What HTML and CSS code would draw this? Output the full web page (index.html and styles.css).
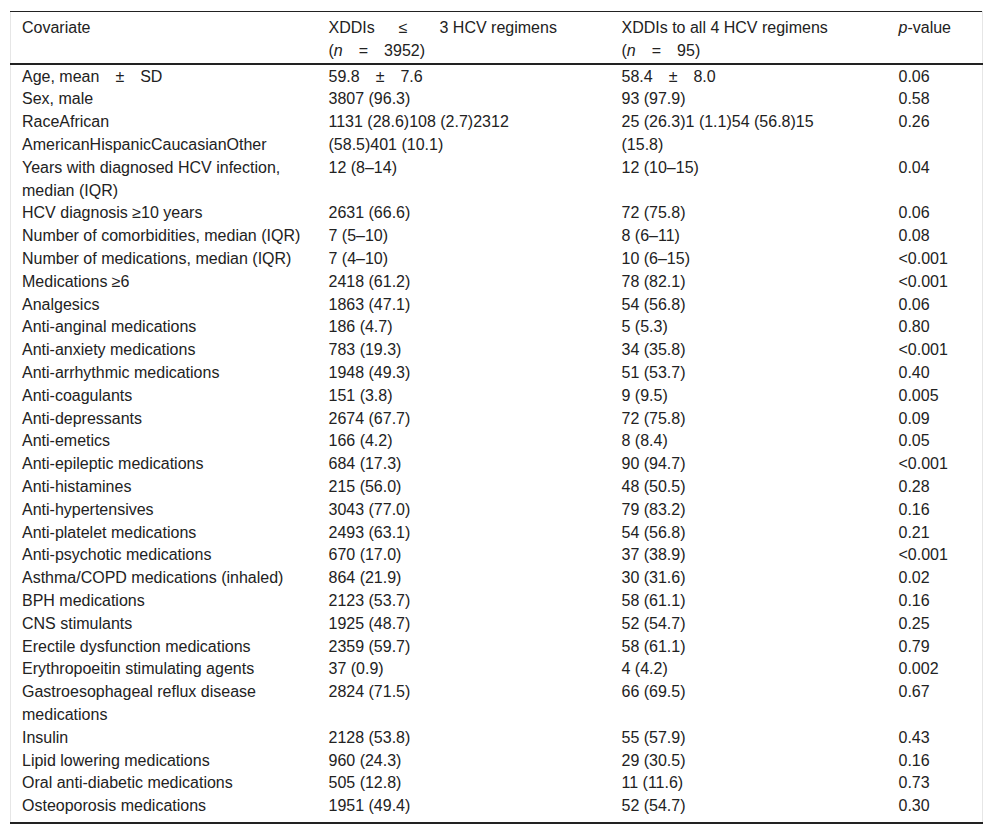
FILE: index.html
```html
<!DOCTYPE html>
<html lang="en">
<head>
<meta charset="utf-8">
<title>Covariates table</title>
<link rel="stylesheet" href="styles.css">
</head>
<body>
<table class="data">
  <colgroup>
    <col class="c1"><col class="c2"><col class="c3"><col class="c4">
  </colgroup>
  <thead>
    <tr>
      <th>Covariate</th>
      <th>XDDIs&#8195;&#8194;≤&#8195;&#8195;3 HCV regimens<br>(<i>n</i>&#8195;=&#8195;3952)</th>
      <th>XDDIs to all 4 HCV regimens<br>(<i>n</i>&#8195;=&#8195;95)</th>
      <th><i>p</i>-value</th>
    </tr>
  </thead>
  <tbody>
    <tr><td>Age, mean&#8195;±&#8195;SD</td><td>59.8&#8195;±&#8195;7.6</td><td>58.4&#8195;±&#8195;8.0</td><td>0.06</td></tr>
    <tr><td>Sex, male</td><td>3807 (96.3)</td><td>93 (97.9)</td><td>0.58</td></tr>
    <tr><td>RaceAfrican AmericanHispanicCaucasianOther</td><td>1131 (28.6)108 (2.7)2312 (58.5)401 (10.1)</td><td>25 (26.3)1 (1.1)54 (56.8)15 (15.8)</td><td>0.26</td></tr>
    <tr><td>Years with diagnosed HCV infection, median (IQR)</td><td>12 (8–14)</td><td>12 (10–15)</td><td>0.04</td></tr>
    <tr><td>HCV diagnosis ≥10 years</td><td>2631 (66.6)</td><td>72 (75.8)</td><td>0.06</td></tr>
    <tr><td>Number of comorbidities, median (IQR)</td><td>7 (5–10)</td><td>8 (6–11)</td><td>0.08</td></tr>
    <tr><td>Number of medications, median (IQR)</td><td>7 (4–10)</td><td>10 (6–15)</td><td>&lt;0.001</td></tr>
    <tr><td>Medications ≥6</td><td>2418 (61.2)</td><td>78 (82.1)</td><td>&lt;0.001</td></tr>
    <tr><td>Analgesics</td><td>1863 (47.1)</td><td>54 (56.8)</td><td>0.06</td></tr>
    <tr><td>Anti-anginal medications</td><td>186 (4.7)</td><td>5 (5.3)</td><td>0.80</td></tr>
    <tr><td>Anti-anxiety medications</td><td>783 (19.3)</td><td>34 (35.8)</td><td>&lt;0.001</td></tr>
    <tr><td>Anti-arrhythmic medications</td><td>1948 (49.3)</td><td>51 (53.7)</td><td>0.40</td></tr>
    <tr><td>Anti-coagulants</td><td>151 (3.8)</td><td>9 (9.5)</td><td>0.005</td></tr>
    <tr><td>Anti-depressants</td><td>2674 (67.7)</td><td>72 (75.8)</td><td>0.09</td></tr>
    <tr><td>Anti-emetics</td><td>166 (4.2)</td><td>8 (8.4)</td><td>0.05</td></tr>
    <tr><td>Anti-epileptic medications</td><td>684 (17.3)</td><td>90 (94.7)</td><td>&lt;0.001</td></tr>
    <tr><td>Anti-histamines</td><td>215 (56.0)</td><td>48 (50.5)</td><td>0.28</td></tr>
    <tr><td>Anti-hypertensives</td><td>3043 (77.0)</td><td>79 (83.2)</td><td>0.16</td></tr>
    <tr><td>Anti-platelet medications</td><td>2493 (63.1)</td><td>54 (56.8)</td><td>0.21</td></tr>
    <tr><td>Anti-psychotic medications</td><td>670 (17.0)</td><td>37 (38.9)</td><td>&lt;0.001</td></tr>
    <tr><td>Asthma/COPD medications (inhaled)</td><td>864 (21.9)</td><td>30 (31.6)</td><td>0.02</td></tr>
    <tr><td>BPH medications</td><td>2123 (53.7)</td><td>58 (61.1)</td><td>0.16</td></tr>
    <tr><td>CNS stimulants</td><td>1925 (48.7)</td><td>52 (54.7)</td><td>0.25</td></tr>
    <tr><td>Erectile dysfunction medications</td><td>2359 (59.7)</td><td>58 (61.1)</td><td>0.79</td></tr>
    <tr><td>Erythropoeitin stimulating agents</td><td>37 (0.9)</td><td>4 (4.2)</td><td>0.002</td></tr>
    <tr><td>Gastroesophageal reflux disease medications</td><td>2824 (71.5)</td><td>66 (69.5)</td><td>0.67</td></tr>
    <tr><td>Insulin</td><td>2128 (53.8)</td><td>55 (57.9)</td><td>0.43</td></tr>
    <tr><td>Lipid lowering medications</td><td>960 (24.3)</td><td>29 (30.5)</td><td>0.16</td></tr>
    <tr><td>Oral anti-diabetic medications</td><td>505 (12.8)</td><td>11 (11.6)</td><td>0.73</td></tr>
    <tr><td>Osteoporosis medications</td><td>1951 (49.4)</td><td>52 (54.7)</td><td>0.30</td></tr>
  </tbody>
</table>
</body>
</html>
```

FILE: styles.css
```css
html, body {
  margin: 0;
  padding: 0;
  background: #fff;
}

body {
  padding: 11px 10px;
  font-family: "Liberation Sans", Arial, sans-serif;
  font-size: 16px;
  line-height: 22.8px;
  color: #222;
}

.data {
  width: 972px;
  table-layout: fixed;
  border-collapse: collapse;
  border-top: 1px solid #222;
  border-bottom: 2px solid #222;
  border-left: 1px solid #e6e6e6;
  border-right: 1px solid #e6e6e6;
}

.c1 { width: 307px; }
.c2 { width: 293px; }
.c3 { width: 277px; }
.c4 { width: 95px; }

.data th,
.data td {
  text-align: left;
  vertical-align: top;
  font-weight: normal;
  padding: 0 30px 0 11px;
}

.data th:first-child,
.data td:first-child,
.data th:last-child,
.data td:last-child {
  padding-right: 8px;
}

.data th {
  padding-top: 5px;
  padding-bottom: 0;
  border-bottom: 2px solid #222;
}

.data tbody tr:first-child td {
  padding-top: 1px;
}

.data tbody tr:last-child td {
  padding-bottom: 4px;
}
```
